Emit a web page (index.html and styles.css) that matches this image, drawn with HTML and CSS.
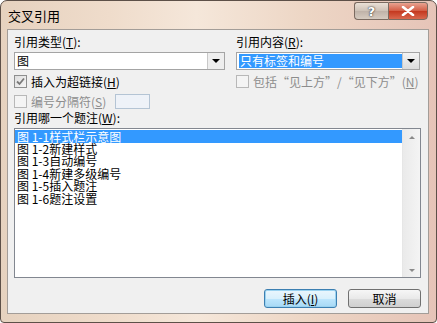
FILE: index.html
```html
<!DOCTYPE html>
<html>
<head>
<meta charset="utf-8">
<link rel="stylesheet" href="styles.css">
</head>
<body>
<div class="window">
  <div class="titlebar">
    <span class="title">交叉引用</span>
    <div class="caption-btns">
      <div class="cbtn help">?</div>
      <div class="cbtn close">
        <svg width="14" height="10" viewBox="0 0 14 10"><path d="M2 1 L12 9 M12 1 L2 9" stroke="#fff" stroke-width="2.6" stroke-linecap="round"/></svg>
      </div>
    </div>
  </div>
  <div class="content">
    <div class="grid">
      <div class="col left">
        <div class="label">引用类型(<u>T</u>):</div>
        <div class="combo">
          <div class="combo-text">图</div>
          <div class="combo-btn flat"><span class="tri"></span></div>
        </div>
        <div class="check-row first">
          <span class="box checked">
            <svg width="11" height="11" viewBox="0 0 11 11"><path d="M2 5.5 L4.5 8 L9 2.5" stroke="#7a7a7a" stroke-width="1.8" fill="none"/></svg>
          </span>
          <span>插入为超链接(<u>H</u>)</span>
        </div>
        <div class="check-row disabled sep-row">
          <span class="box"></span>
          <span>编号分隔符(<u>S</u>)</span>
          <span class="sep-input"></span>
        </div>
      </div>
      <div class="col right">
        <div class="label">引用内容(<u>R</u>):</div>
        <div class="combo">
          <div class="combo-text"><span class="sel">只有标签和编号</span></div>
          <div class="combo-btn"><span class="tri"></span></div>
        </div>
        <div class="check-row first disabled">
          <span class="box"></span>
          <span>包括“见上方”/“见下方”(<u>N</u>)</span>
        </div>
      </div>
    </div>
    <div class="label list-label">引用哪一个题注(<u>W</u>):</div>
    <div class="listbox">
      <div class="items">
        <div class="item selected">图 1-1样式栏示意图</div>
        <div class="item">图 1-2新建样式</div>
        <div class="item">图 1-3自动编号</div>
        <div class="item">图 1-4新建多级编号</div>
        <div class="item">图 1-5插入题注</div>
        <div class="item">图 1-6题注设置</div>
      </div>
      <div class="scrollbar">
        <span class="arrow up"></span>
        <span class="arrow down"></span>
      </div>
    </div>
    <div class="buttons">
      <div class="btn default">插入(<u>I</u>)</div>
      <div class="btn">取消</div>
    </div>
  </div>
</div>
</body>
</html>
```

FILE: styles.css
```css
html, body {
  margin: 0;
  padding: 0;
  background: #ffffff;
}
body {
  font-family: "Noto Sans CJK SC", "Noto Sans", sans-serif;
  font-size: 12px;
  color: #000;
}
.window {
  width: 437px;
  height: 323px;
  box-sizing: border-box;
  border: 1px solid #5d5048;
  border-radius: 7px 7px 4px 4px;
  background: linear-gradient(to right, #e6d2bf 0%, #efdccb 25%, #f5e7da 45%, #edd6c5 70%, #e6c4b8 100%);
  display: flex;
  flex-direction: column;
  overflow: hidden;
}
.titlebar {
  height: 28px;
  flex: none;
  display: flex;
  justify-content: space-between;
  align-items: flex-start;
}
.title {
  font-size: 13px;
  line-height: 16px;
  margin: 7px 0 0 7px;
  color: #000;
}
.caption-btns {
  display: flex;
  margin-right: 8px;
  margin-top: 1px;
}
.cbtn {
  height: 18px;
  box-sizing: border-box;
  border: 1px solid #7a6a60;
  display: flex;
  align-items: center;
  justify-content: center;
}
.help {
  width: 34px;
  border-radius: 3px 0 0 4px;
  background: linear-gradient(to bottom, #eae0d6, #cdc1b6 50%, #bfb2a8 51%, #d6cbc0);
  color: #fff;
  font-family: "DejaVu Sans", sans-serif;
  font-weight: bold;
  font-size: 13px;
  text-shadow: 0 0 2px #333, 0 0 1px #333;
  border-right: none;
}
.close {
  width: 40px;
  border-radius: 0 3px 4px 0;
  background: linear-gradient(to bottom, #e8a391, #d35b43 50%, #c4381f 51%, #d9684e);
}
.content {
  flex: 1;
  margin: 0 7px 8px 6px;
  border: 1px solid #a39d98;
  background: #f0f0f0;
  padding: 3px 7px 0 6px;
  display: flex;
  flex-direction: column;
}
.grid {
  display: grid;
  grid-template-columns: 211px 184px;
  column-gap: 11px;
}
.label {
  line-height: 14px;
  height: 14px;
  margin-top: 2px;
}
.combo {
  margin-top: 3px;
  height: 18px;
  box-sizing: border-box;
  border: 1px solid #a4a4a4;
  background: #fff;
  display: flex;
}
.combo-text {
  flex: 1;
  line-height: 16px;
  padding-left: 2px;
  display: flex;
  align-items: stretch;
}
.sel {
  background: #3399ff;
  color: #fff;
  flex: 1;
  margin: 1px 0;
  line-height: 14px;
  padding-left: 1px;
}
.combo-btn {
  width: 16px;
  flex: none;
  border-left: 1px solid #c8c8c8;
  background: linear-gradient(to bottom, #f4f4f4, #dcdcdc);
  display: flex;
  align-items: center;
  justify-content: center;
}
.combo-btn.flat {
  background: #eeeeee;
}
.tri {
  width: 0;
  height: 0;
  border-left: 4px solid transparent;
  border-right: 4px solid transparent;
  border-top: 4px solid #000;
}
.check-row {
  display: flex;
  align-items: center;
  gap: 4px;
  height: 16px;
  margin-top: 3px;
}
.sep-row {
  height: 16px;
  margin-top: 4px;
}
.box {
  width: 13px;
  height: 13px;
  box-sizing: border-box;
  border: 1px solid #8e8f8f;
  background: linear-gradient(135deg, #e0e0e0, #fafafa);
  display: flex;
  align-items: center;
  justify-content: center;
  flex: none;
}
.box.checked {
  background: linear-gradient(135deg, #dedede, #f6f6f6);
}
.disabled {
  color: #8d8d8d;
}
.disabled .box {
  border-color: #b8b8b8;
  background: #f4f4f4;
}
.sep-input {
  width: 35px;
  height: 15px;
  box-sizing: border-box;
  border: 1px solid #b4c4d4;
  background: #eef2f8;
  margin-left: 5px;
}
.list-label {
  margin-top: 2px;
}
.listbox {
  margin-top: 3px;
  height: 150px;
  box-sizing: border-box;
  border: 1px solid #828790;
  background: #fff;
  display: flex;
}
.items {
  flex: 1;
  padding-top: 1px;
}
.item {
  height: 12.4px;
  line-height: 12px;
  padding-left: 2px;
  font-size: 12px;
  white-space: nowrap;
}
.item.selected {
  background: #3399ff;
  color: #fff;
  height: 13px;
  line-height: 13px;
}
.scrollbar {
  width: 17px;
  flex: none;
  background: linear-gradient(to right, #eaeaea, #f4f4f4);
  border-left: 1px solid #e6e6e6;
  display: flex;
  flex-direction: column;
  justify-content: space-between;
  align-items: center;
  padding: 7px 0 5px;
}
.arrow {
  width: 0;
  height: 0;
  border-left: 3px solid transparent;
  border-right: 3px solid transparent;
}
.arrow.up {
  border-bottom: 3px solid #8a8a8a;
}
.arrow.down {
  border-top: 3px solid #8a8a8a;
}
.buttons {
  display: flex;
  justify-content: flex-end;
  gap: 11px;
  margin-top: 11px;
  padding-right: 0;
}
.btn {
  width: 73px;
  height: 19px;
  box-sizing: border-box;
  border: 1px solid #707070;
  border-radius: 3px;
  background: linear-gradient(to bottom, #f6f6f6, #e9e9e9 50%, #dcdcdc 51%, #d0d0d0);
  text-align: center;
  line-height: 17px;
}
.btn.default {
  border-color: #3c7fb1;
  background: linear-gradient(to bottom, #eaf6fd, #d9f0fc 50%, #bee6fd 51%, #a7d9f5);
  box-shadow: inset 0 0 0 1px #9ad2f0;
}
u {
  text-decoration: underline;
}
```
